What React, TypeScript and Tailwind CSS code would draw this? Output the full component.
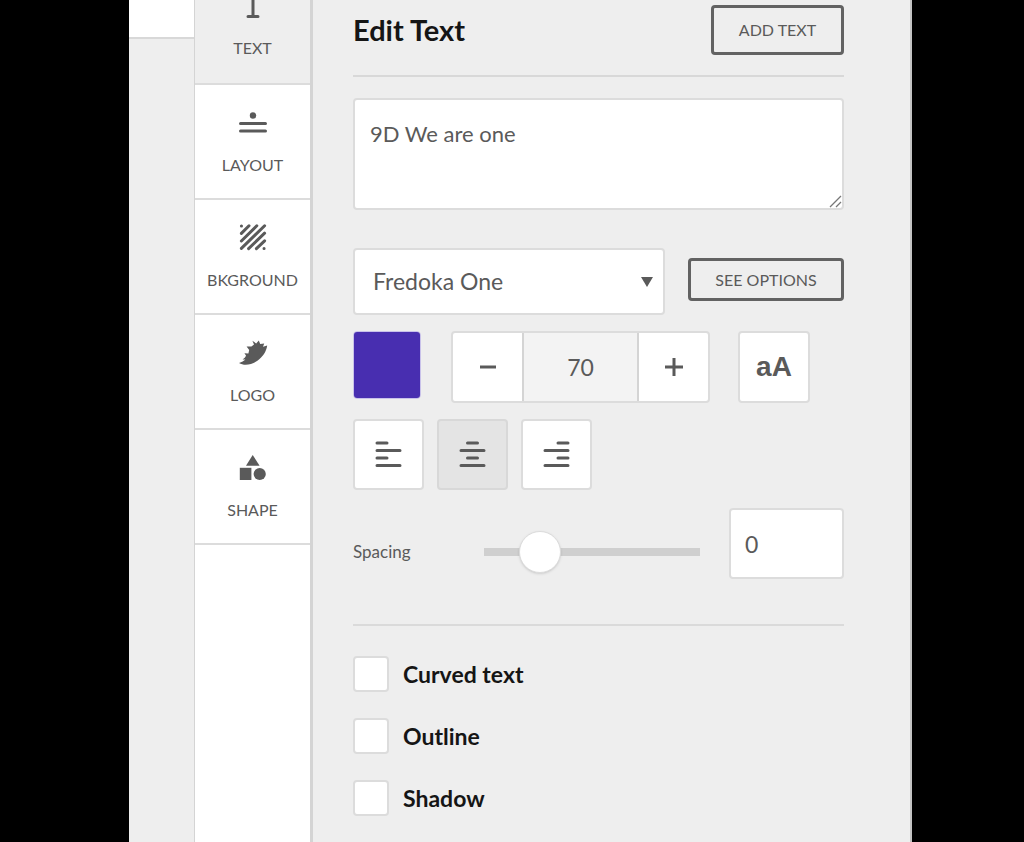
import { useState } from 'react'
import type { ReactNode } from 'react'
import clsx from 'clsx'

type Align = 'left' | 'center' | 'right'

interface NavItem {
  label: string
  icon: ReactNode
}

const line = { stroke: 'currentColor', strokeWidth: 3, strokeLinecap: 'round' as const }

const navItems: NavItem[] = [
  {
    label: 'TEXT',
    icon: <path d="M4.5 5v-5h19v5M14 0v23M9 23.500h10" fill="none" {...line} />,
  },
  {
    label: 'LAYOUT',
    icon: (
      <>
        <circle cx="14" cy="5.5" r="3.2" fill="currentColor" />
        <path d="M1.5 13.5h25M1.5 21h25" {...line} />
      </>
    ),
  },
  {
    label: 'BKGROUND',
    icon: (
      <path
        d="M2.4 1h.1M2.4 8.4L10 .8M2.4 16L17.8.8M2.4 23.4L25.6.8M9.6 23.6L25.6 8.2M17.4 23.6l8.2-7.8M25 23.4h.1"
        {...line}
      />
    ),
  },
  {
    label: 'LOGO',
    icon: (
      <path
        d="M0 23C2.8 22.4 4.8 21.2 6.4 19.6L3.6 19.4C5.4 18.4 6.4 17.2 7 15.6L5.4 13.2L9.4 13.4L10.2 10L7.6 6.4L12.4 6.6L15 4.6L13.4 .8L17.2 3.4L19.8 .4L21.2 4L25.2 3.6L24 6.8L28.2 5.6C27.4 11.6 23.8 17 18.4 20.8C12.8 24.8 5.2 26.2 0 23Z"
        fill="currentColor"
      />
    ),
  },
  {
    label: 'SHAPE',
    icon: (
      <g fill="currentColor">
        <path d="M13.7 0L20.6 10.7H7Z" />
        <rect x=".8" y="12.8" width="11.6" height="12.2" />
        <circle cx="20.7" cy="19" r="6.1" />
      </g>
    ),
  },
]

const alignPaths: Record<Align, string> = {
  left: 'M2 2h10M2 9.5h23M2 17h10M2 24.5h23',
  center: 'M8.5 2h10M2 9.5h23M8.5 17h10M2 24.5h23',
  right: 'M15 2h10M2 9.5h23M15 17h10M2 24.5h23',
}

const effects = ['Curved text', 'Outline', 'Shadow']

function SideNav() {
  return (
    <nav className="w-[119px] shrink-0 border-l border-r-3 border-[#d4d4d4] bg-white">
      {navItems.map((item, i) => (
        <button
          key={item.label}
          className={clsx(
            'flex w-full flex-col items-center justify-end gap-[17px] overflow-hidden border-b-2 border-[#dcdcdc] text-base leading-5',
            i === 0 ? 'h-[85px] bg-[#eeeeee] pb-[25px]' : 'h-[115px] pb-[23px]'
          )}
        >
          <svg viewBox="0 0 28 28" className="size-7 shrink-0 overflow-visible">
            {item.icon}
          </svg>
          {item.label}
        </button>
      ))}
    </nav>
  )
}

export default function App() {
  const [text, setText] = useState('9D We are one')
  const [size, setSize] = useState(70)
  const [align, setAlign] = useState<Align>('center')
  const [spacing, setSpacing] = useState(0)

  return (
    <div className="min-h-screen bg-black pr-28 pl-[129px] font-['Lato',sans-serif] text-[#5a5a5a]">
      <div className="flex min-h-screen border-r-2 border-[#c4c4c4] bg-[#eeeeee]">
        <div className="w-[65px] shrink-0">
          <div className="h-[39px] border-b-2 border-[#d8d8d8] bg-white" />
        </div>

        <SideNav />

        <main className="min-w-0 flex-1 pt-[5px] pr-[66px] pb-[26px] pl-10">
          {/* Header */}
          <div className="flex items-center justify-between border-b-2 border-[#d8d8d8] pb-5">
            <h1 className="text-[29px] leading-[50px] font-bold text-[#151515]">Edit Text</h1>
            <button className="h-[50px] w-[133px] rounded border-3 border-[#626262] text-base">ADD TEXT</button>
          </div>

          <div className="relative mt-[21px]">
            <textarea
              aria-label="Text"
              value={text}
              onChange={e => setText(e.target.value)}
              className="block h-28 w-full rounded border-2 border-[#dcdcdc] bg-white px-[15px] py-[18px] text-[22px] leading-8 [&::-webkit-resizer]:hidden"
            />
            <svg viewBox="0 0 13 13" className="pointer-events-none absolute right-[2px] bottom-[2px] size-[13px]">
              <path d="M1 12L12 1M7 12l5-5" stroke="#777777" strokeWidth="1.3" />
            </svg>
          </div>

          {/* Font */}
          <div className="mt-[38px] flex items-center gap-[23px]">
            <div className="relative flex-1">
              <select
                aria-label="Font"
                className="h-[67px] w-full appearance-none rounded border-2 border-[#dcdcdc] bg-white px-[18px] text-[23px]"
              >
                <option>Fredoka One</option>
              </select>
              <svg viewBox="0 0 12 10" className="pointer-events-none absolute top-[29px] right-3 h-[10px] w-3">
                <path d="M0 0h12L6 10Z" fill="currentColor" />
              </svg>
            </div>
            <button className="mb-1 h-[43px] w-[156px] rounded border-3 border-[#626262] text-base">
              SEE OPTIONS
            </button>
          </div>

          {/* Color and size */}
          <div className="mt-4 flex h-[72px]">
            <input
              type="color"
              aria-label="Text color"
              defaultValue="#482eb0"
              className="size-[68px] appearance-none overflow-hidden rounded border border-[#c9c2ea] p-0 [&::-webkit-color-swatch]:border-0 [&::-webkit-color-swatch-wrapper]:p-0"
            />
            <div className="ml-[30px] flex rounded border-2 border-[#dcdcdc] bg-white">
              <button aria-label="Decrease size" onClick={() => setSize(size - 1)} className="flex w-[69px] items-center justify-center">
                <svg viewBox="0 0 18 18" className="size-[18px]">
                  <path d="M1 9h16" stroke="currentColor" strokeWidth="3" />
                </svg>
              </button>
              <input
                aria-label="Font size"
                value={size}
                onChange={e => setSize(Number(e.target.value) || 0)}
                className="w-[117px] border-x-2 border-[#d4d4d4] bg-[#f3f3f3] text-center text-[23px]"
              />
              <button aria-label="Increase size" onClick={() => setSize(size + 1)} className="flex w-[69px] items-center justify-center">
                <svg viewBox="0 0 18 18" className="size-[18px]">
                  <path d="M0 9h18M9 0v18" stroke="currentColor" strokeWidth="3" />
                </svg>
              </button>
            </div>
            <button className="ml-7 w-[72px] rounded border-2 border-[#dcdcdc] bg-white font-['Liberation_Sans',sans-serif] text-[28px] font-bold">
              aA
            </button>
          </div>

          {/* Alignment */}
          <div className="mt-4 flex gap-[13px]">
            {(Object.keys(alignPaths) as Align[]).map(a => (
              <button
                key={a}
                aria-label={`Align ${a}`}
                onClick={() => setAlign(a)}
                className={clsx(
                  'flex size-[71px] items-center justify-center rounded border-2',
                  a === align ? 'border-[#d8d8d8] bg-[#e4e4e4]' : 'border-[#dcdcdc] bg-white'
                )}
              >
                <svg viewBox="0 0 27 27" className="size-[27px]">
                  <path d={alignPaths[a]} {...line} />
                </svg>
              </button>
            ))}
          </div>

          {/* Letter spacing */}
          <div className="mt-[18px] flex items-end border-b-2 border-[#dadada] pb-[45px]">
            <label htmlFor="spacing" className="mb-1.5 w-[131px] text-[17px] leading-[42px]">
              Spacing
            </label>
            <input
              id="spacing"
              type="range"
              min={-20}
              max={80}
              value={spacing}
              onChange={e => setSpacing(Number(e.target.value))}
              className="mb-1.5 h-[42px] min-w-0 flex-1 appearance-none bg-transparent [&::-webkit-slider-runnable-track]:h-2 [&::-webkit-slider-runnable-track]:bg-[#cfcfcf] [&::-webkit-slider-thumb]:-mt-[17px] [&::-webkit-slider-thumb]:size-[42px] [&::-webkit-slider-thumb]:appearance-none [&::-webkit-slider-thumb]:rounded-full [&::-webkit-slider-thumb]:border [&::-webkit-slider-thumb]:border-[#dcdcdc] [&::-webkit-slider-thumb]:bg-white [&::-webkit-slider-thumb]:shadow"
            />
            <input
              aria-label="Spacing value"
              value={spacing}
              onChange={e => setSpacing(Number(e.target.value) || 0)}
              className="ml-[29px] h-[71px] w-[115px] rounded border-2 border-[#dcdcdc] bg-white px-[14px] text-[23px]"
            />
          </div>

          {/* Effects */}
          <div className="mt-[30px] flex flex-col items-start gap-[26px]">
            {effects.map(effect => (
              <label key={effect} className="flex items-center gap-[14px] text-[23px] leading-9 font-bold text-[#151515]">
                <input
                  type="checkbox"
                  className="size-9 appearance-none rounded border-2 border-[#dcdcdc] bg-white checked:bg-[#482eb0]"
                />
                {effect}
              </label>
            ))}
          </div>
        </main>
      </div>
    </div>
  )
}
